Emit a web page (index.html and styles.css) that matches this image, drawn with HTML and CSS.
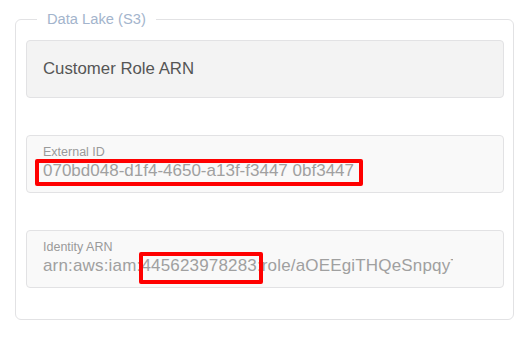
FILE: index.html
```html
<!DOCTYPE html>
<html>
<head>
<meta charset="utf-8">
<link rel="stylesheet" href="styles.css">
</head>
<body>
<fieldset class="group">
  <legend class="group-title">Data Lake (S3)</legend>
  <div class="box box-primary">Customer Role ARN</div>
  <div class="box box-field">
    <div class="field-label">External ID</div>
    <div class="field-value">070bd048-d1f4-4650-a13f-f3447 0bf3447</div>
    <span class="mark mark-ext"></span>
  </div>
  <div class="box box-field">
    <div class="field-label">Identity ARN</div>
    <div class="field-value field-clip">arn:aws:iam:445623978283:role/aOEEgiTHQeSnpqyT</div>
    <span class="mark mark-acct"></span>
  </div>
</fieldset>
</body>
</html>
```
FILE: styles.css
```css
html, body {
  margin: 0;
  padding: 0;
  background: #ffffff;
  font-family: "Liberation Sans", Arial, sans-serif;
}
body {
  padding: 10px 0 0 15px;
  width: 530px;
  height: 344px;
  box-sizing: border-box;
}
.group {
  margin: 0;
  width: 499px;
  box-sizing: border-box;
  border: 1px solid #e2e2e4;
  border-radius: 6px;
  padding: 12px 9px 31px 10px;
  display: flex;
  flex-direction: column;
  gap: 37px;
}
.group-title {
  margin-left: 11px;
  padding: 0 10px;
  font-size: 14.7px;
  line-height: 18px;
  color: #a3b4cc;
}
.box {
  position: relative;
  border: 1px solid #e2e2e4;
  border-radius: 4px;
  box-sizing: border-box;
  padding: 0 16px;
  height: 58px;
}
.box-primary {
  background: #f3f3f3;
  display: flex;
  align-items: center;
  font-size: 16.8px;
  color: #555555;
}
.box-field {
  background: #f9f9f9;
  padding-top: 9px;
}
.field-label {
  font-size: 12.5px;
  line-height: 15px;
  color: #9a9a9a;
}
.field-value {
  margin-top: 1px;
  font-size: 17px;
  line-height: 20px;
  color: #a0a0a0;
  white-space: nowrap;
}
.field-clip {
  width: 410px;
  overflow: hidden;
  letter-spacing: 0.17px;
}
.mark {
  position: absolute;
  border: 4px solid #ff0000;
  border-radius: 2px;
  box-sizing: border-box;
}
.mark-ext {
  left: 8px;
  top: 23px;
  width: 328px;
  height: 27px;
}
.mark-acct {
  left: 112px;
  top: 21px;
  width: 124px;
  height: 32px;
}
```
